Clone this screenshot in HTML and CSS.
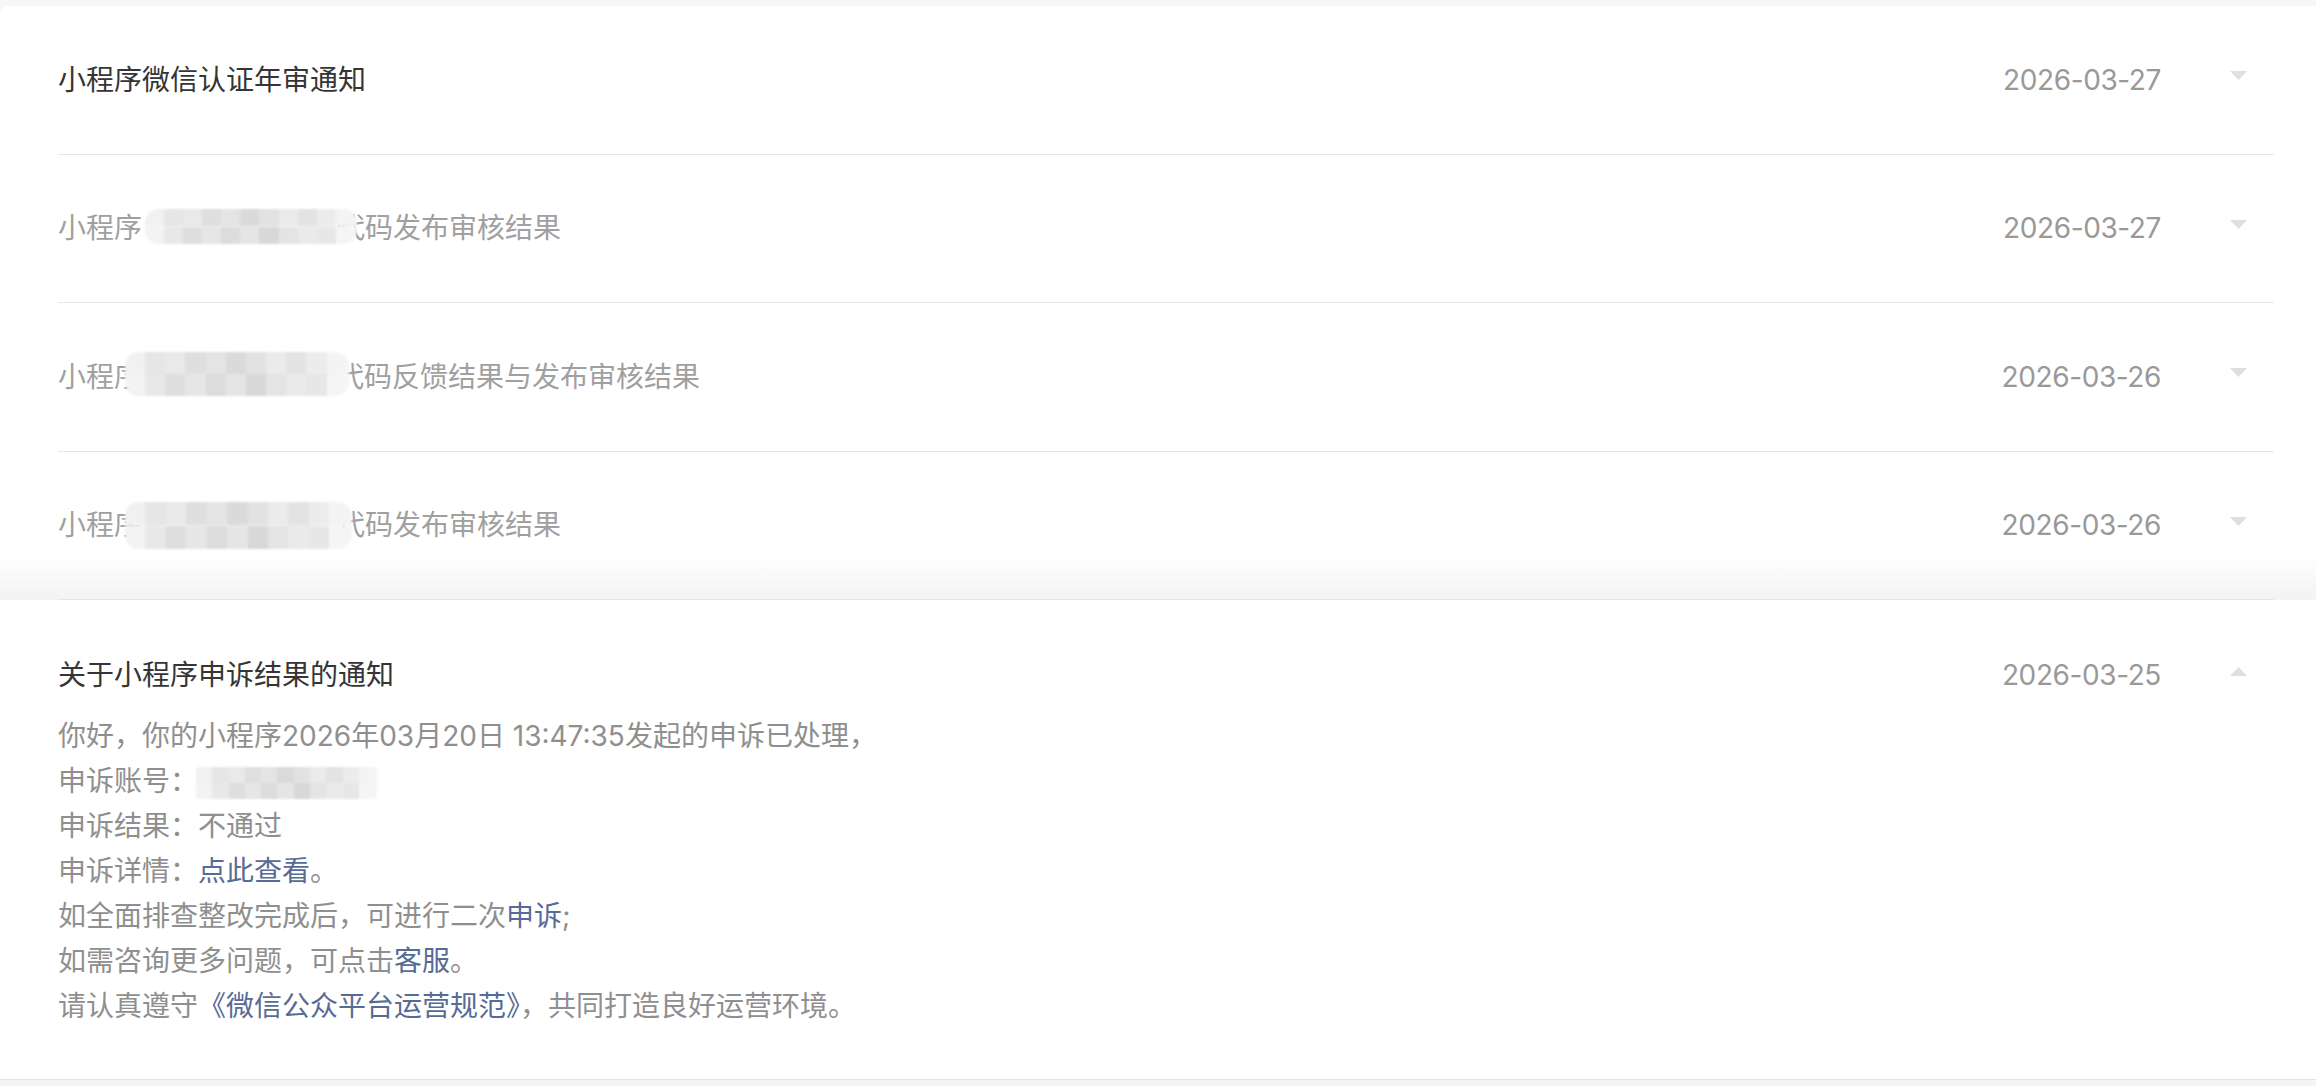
FILE: index.html
```html
<!DOCTYPE html>
<html lang="zh-CN">
<head>
<meta charset="utf-8">
<title>通知</title>
<link rel="stylesheet" href="styles.css">
</head>
<body>
<div class="page">
  <div class="list">
    <div class="item">
      <div class="row">
        <span class="title">小程序微信认证年审通知</span>
        <span class="date">2026-03-27</span>
        <svg class="arrow down" viewBox="0 0 17 9"><polygon points="0,0 17,0 8.5,9"/></svg>
      </div>
    </div>
    <div class="item">
      <div class="row">
        <span class="title read">小程序<span class="gap gap-a"></span>代码发布审核结果<span class="mosaic mosaic-a"></span></span>
        <span class="date">2026-03-27</span>
        <svg class="arrow down" viewBox="0 0 17 9"><polygon points="0,0 17,0 8.5,9"/></svg>
      </div>
    </div>
    <div class="item">
      <div class="row">
        <span class="title read">小程序<span class="gap gap-b"></span>代码反馈结果与发布审核结果<span class="mosaic mosaic-b"></span></span>
        <span class="date">2026-03-26</span>
        <svg class="arrow down" viewBox="0 0 17 9"><polygon points="0,0 17,0 8.5,9"/></svg>
      </div>
    </div>
    <div class="item last">
      <div class="row">
        <span class="title read">小程序<span class="gap gap-a"></span>代码发布审核结果<span class="mosaic mosaic-c"></span></span>
        <span class="date">2026-03-26</span>
        <svg class="arrow down" viewBox="0 0 17 9"><polygon points="0,0 17,0 8.5,9"/></svg>
      </div>
    </div>
  </div>

  <div class="detail">
    <div class="detail-head">
      <span class="title">关于小程序申诉结果的通知</span>
      <span class="date">2026-03-25</span>
      <svg class="arrow up" viewBox="0 0 17 9"><polygon points="0,9 17,9 8.5,0"/></svg>
    </div>
    <div class="detail-body">
      <p>你好，你的小程序2026年03月20日 13:47:35发起的申诉已处理，</p>
      <p class="acct">申诉账号：<span class="mosaic mosaic-d"></span></p>
      <p>申诉结果：不通过</p>
      <p>申诉详情：<a class="link">点此查看</a>。</p>
      <p>如全面排查整改完成后，可进行二次<a class="link">申诉</a>;</p>
      <p>如需咨询更多问题，可点击<a class="link">客服</a>。</p>
      <p>请认真遵守<a class="link">《微信公众平台运营规范》</a>，共同打造良好运营环境。</p>
    </div>
  </div>
</div>
</body>
</html>
```

FILE: styles.css
```css
html, body {
  margin: 0;
  padding: 0;
}
body {
  background: #f3f4f6;
  font-family: Inter, "Noto Sans CJK SC", sans-serif;
  overflow: hidden;
}
.page {
  padding-top: 6px;
  background: #f6f7f9;
}
.list {
  background: #fff;
  border-radius: 8px 0 0 0;
}
.item {
  padding: 0 42px 0 58px;
}
.item.last {
  background: linear-gradient(to bottom, #fff 0, #fff calc(100% - 46px), #f2f3f5 100%);
}
.row {
  height: 147.5px;
  display: flex;
  align-items: center;
  border-bottom: 1px solid #e4e5e9;
}
.title {
  flex: 1;
  font-size: 28px;
  line-height: 40px;
  color: #353535;
  position: relative;
  white-space: nowrap;
}
.title.read {
  color: #a0a0a0;
}
.gap {
  display: inline-block;
  height: 10px;
}
.gap-a { width: 195px; }
.gap-b { width: 194px; }
.date {
  font-size: 28px;
  line-height: 40px;
  color: #999999;
  margin-right: 69px;
  letter-spacing: -0.4px;
}
.arrow {
  width: 17px;
  height: 9px;
  flex: none;
  margin: 0 27px 8px 0;
  fill: #dedee3;
}
.arrow.up {
  margin-bottom: 6px;
}
.mosaic {
  position: absolute;
  border-radius: 14px;
  filter: blur(1.2px);
  background:
    linear-gradient(90deg, #f1f1f1 0 9%, #e6e6e6 9% 18%, #e9e9e9 18% 27%, #dfdfdf 27% 36%, #e4e4e4 36% 45%, #dadada 45% 54%, #e2e2e2 54% 63%, #ebebeb 63% 72%, #e3e3e3 72% 81%, #ececec 81% 90%, #f4f4f4 90% 100%) top / 100% 50% no-repeat,
    linear-gradient(90deg, #f3f3f3 0 9%, #e8e8e8 9% 18%, #dedede 18% 27%, #e6e6e6 27% 36%, #dcdcdc 36% 45%, #e5e5e5 45% 54%, #d8d8d8 54% 63%, #e4e4e4 63% 72%, #eaeaea 72% 81%, #e7e7e7 81% 90%, #f5f5f5 90% 100%) bottom / 100% 50% no-repeat;
}
.mosaic-a { left: 87px; top: 1px; width: 212px; height: 35px; }
.mosaic-b { left: 67px; top: -5px; width: 224px; height: 44px; }
.mosaic-c { left: 67px; top: -3px; width: 227px; height: 47px; }
.mosaic-d { left: 138px; top: 8px; width: 181px; height: 32px; border-radius: 4px; }

.detail {
  background: #fff;
  padding: 52px 42px 49.5px 58px;
  border-bottom: 1px solid #e4e5e9;
}
.detail-head {
  display: flex;
  align-items: center;
  height: 45px;
}
.detail-body {
  margin-top: 17px;
  font-size: 28px;
  line-height: 45px;
  color: #8f8f8f;
}
.detail-body p {
  margin: 0;
  white-space: nowrap;
}
.acct {
  position: relative;
}
.link {
  color: #576b95;
  text-decoration: none;
}
```
